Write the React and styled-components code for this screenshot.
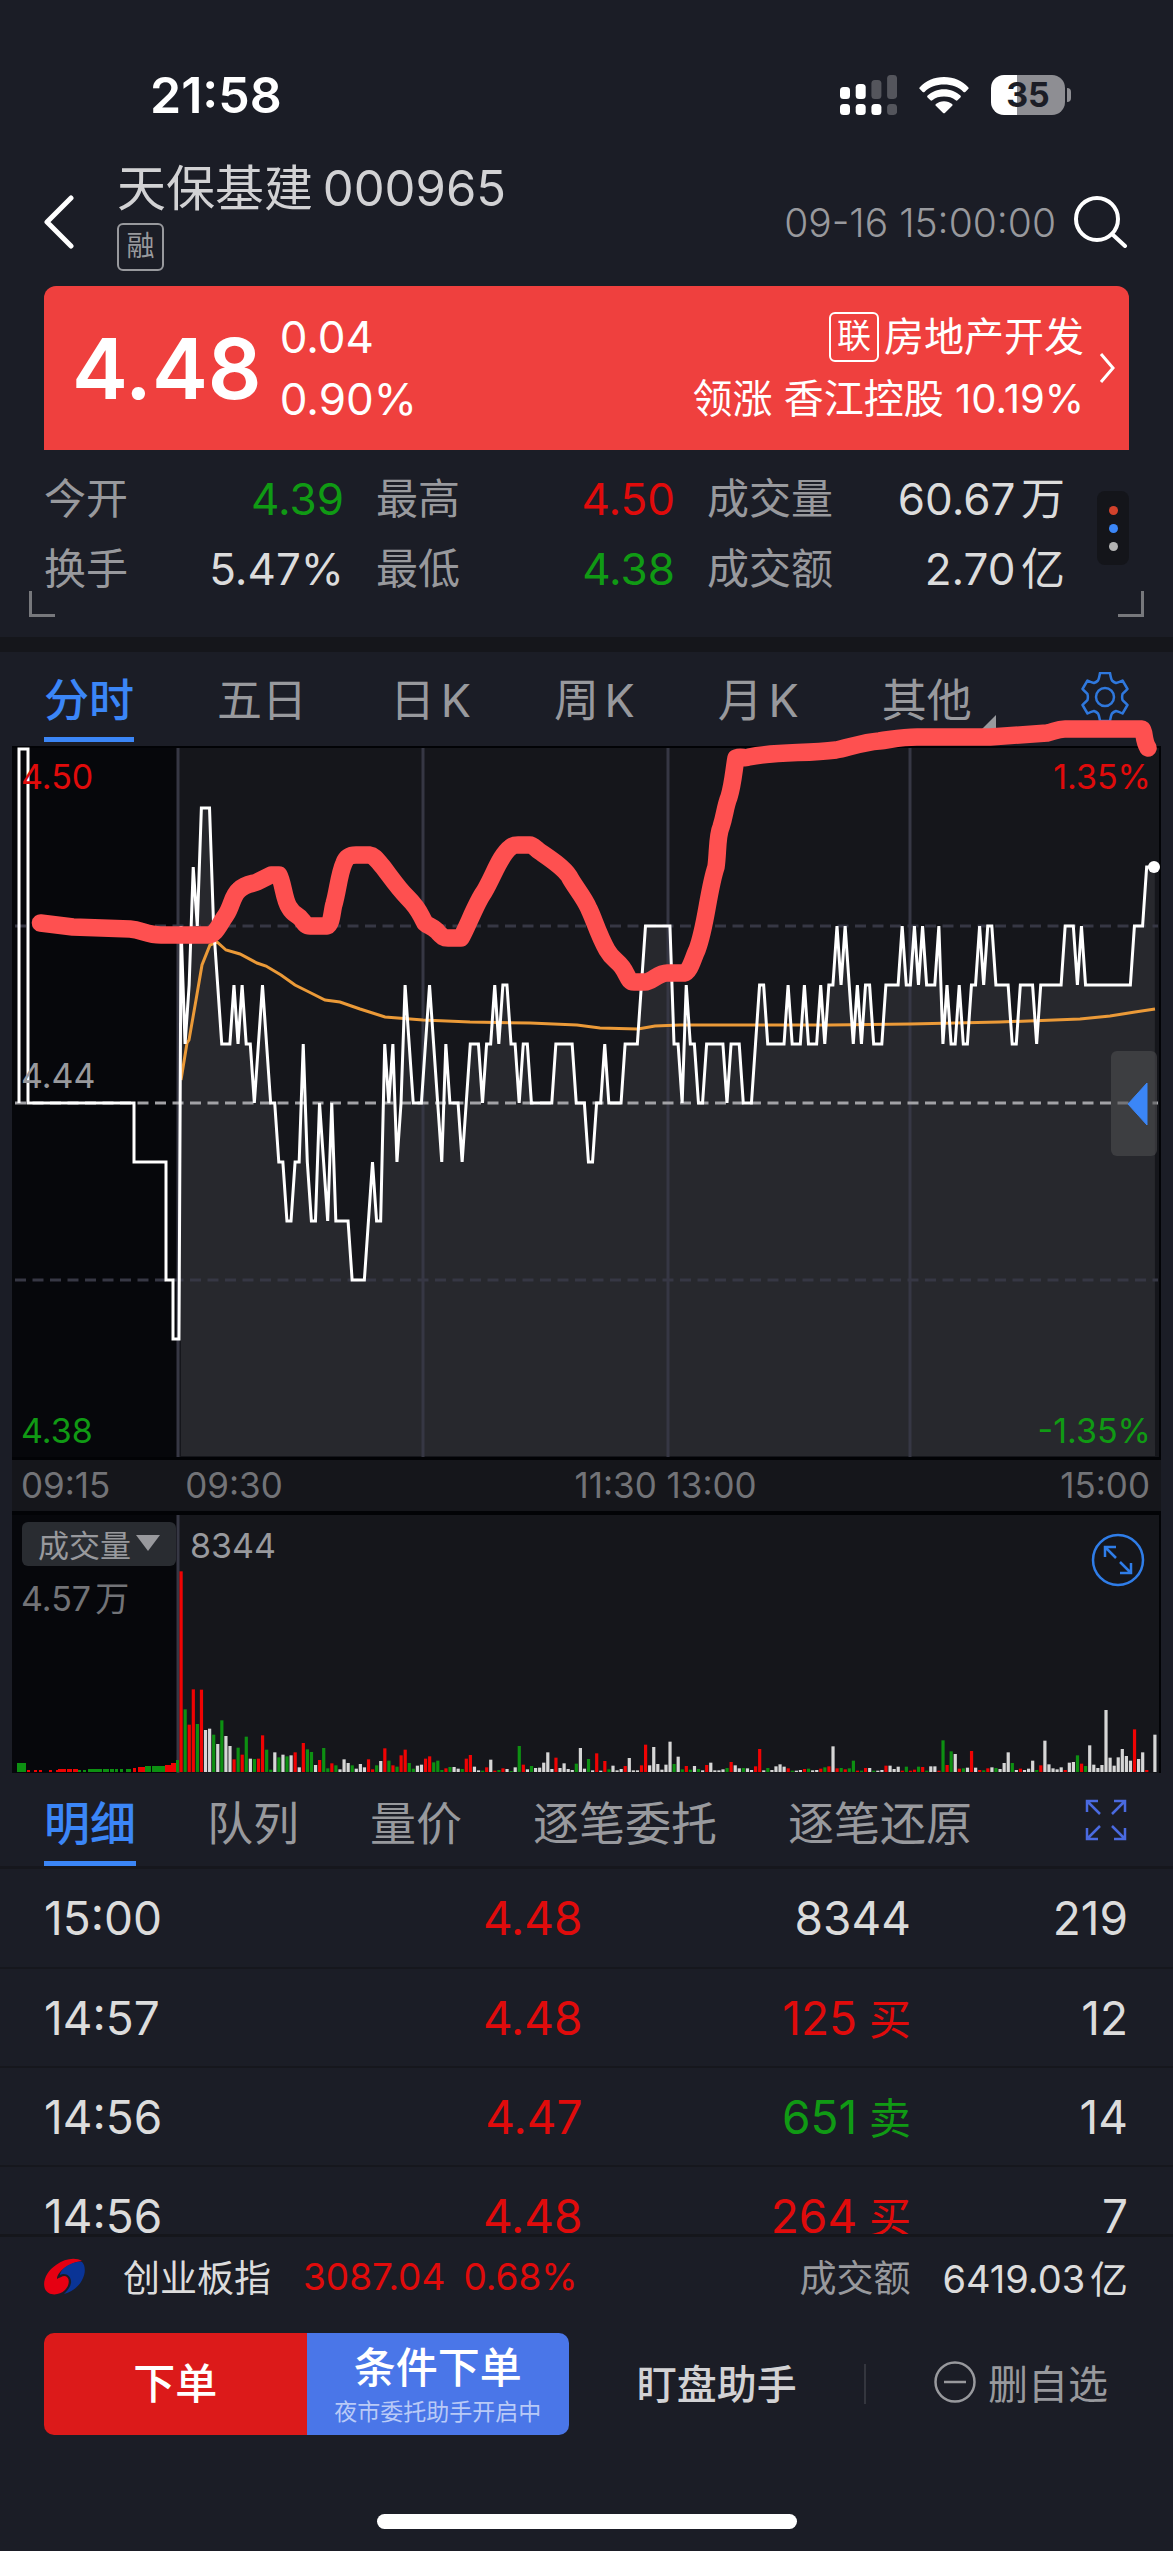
import styled, { createGlobalStyle, css } from "styled-components";

const colors = {
  page: "#1b1d26",
  panel: "#15161b",
  night: "#06070b",
  grid: "#363744",
  text: "#dcdcdc",
  muted: "#98999d",
  dim: "#727377",
  red: "#e00b0b",
  green: "#109a14",
  blue: "#3b86f7",
};

const BAR_COLORS = { r: "#f00303", g: "#0d9012", w: "#d6d6d6" };

// [minute, price in cents over 4.00]
const PRICES = [
  [0, 47], [1, 45], [2, 46], [3, 48], [4, 47], [5, 49], [7, 49], [8, 47], [9, 46], [10, 45],
  [12, 45], [13, 46], [14, 45], [15, 46], [16, 45], [17, 45], [18, 44], [19, 45], [20, 46],
  [21, 45], [22, 44], [23, 44], [24, 43], [25, 43], [26, 42], [27, 42], [28, 43], [29, 43],
  [30, 45], [31, 43], [32, 42], [33, 42], [34, 44], [35, 43], [36, 42], [37, 44], [38, 42],
  [41, 42], [42, 41], [45, 41], [46, 42], [47, 43], [48, 42], [49, 42], [50, 45], [51, 44],
  [52, 45], [53, 43], [54, 44], [55, 46], [56, 45], [57, 44], [59, 44], [60, 45], [61, 46],
  [62, 45], [63, 44], [64, 43], [65, 45], [66, 44], [68, 44], [69, 43], [70, 44], [71, 45],
  [73, 45], [74, 44], [75, 45], [76, 45], [77, 46], [78, 45], [79, 46], [80, 46], [81, 45],
  [82, 45], [83, 44], [84, 45], [85, 45], [86, 44], [91, 44], [92, 45], [96, 45], [97, 44],
  [99, 44], [100, 43], [101, 43], [102, 44], [103, 44], [104, 45], [105, 44], [108, 44],
  [109, 45], [112, 45], [113, 46], [114, 47], [120, 47], [121, 45], [122, 45], [123, 44],
  [124, 46], [125, 45], [126, 45], [127, 44], [128, 44], [129, 45], [133, 45], [134, 44],
  [135, 45], [137, 45], [138, 44], [140, 44], [141, 45], [142, 46], [143, 46], [144, 45],
  [148, 45], [149, 46], [150, 45], [152, 45], [153, 46], [154, 45], [156, 45], [157, 46],
  [158, 45], [159, 46], [160, 46], [161, 47], [162, 46], [163, 47], [164, 46], [165, 45],
  [166, 46], [167, 45], [168, 46], [169, 46], [170, 45], [172, 45], [173, 46], [176, 46],
  [177, 47], [178, 46], [179, 46], [180, 47], [181, 46], [182, 47], [183, 46], [185, 46],
  [186, 47], [187, 45], [188, 46], [189, 45], [190, 45], [191, 46], [192, 45], [193, 45],
  [194, 46], [195, 46], [196, 47], [197, 46], [198, 47], [199, 47], [200, 46], [203, 46],
  [204, 45], [205, 45], [206, 46], [209, 46], [210, 45], [211, 46], [216, 46], [217, 47],
  [219, 47], [220, 46], [221, 47], [222, 46], [233, 46], [234, 47], [236, 47], [237, 48],
  [239, 48],
];

// one entry per minute: colour and relative volume
const VOLUMES = `r602 g188 r142 r248 g144 r247 w126 w130 g112 w84 g155 w108 w78 r38 g73 r52 g106 w40 g39 r40
r110 g67 g7 w59 g44 w52 g47 w50 r59 w14 r87 g68 g60 w21 r36 g72 g11 r26 g20 w8
w38 w27 g20 w10 w24 w14 r38 r8 g20 w33 r71 g34 r20 g16 r50 r67 g27 g10 w19 w22
r40 r47 g29 g34 g6 r11 g15 w15 w10 g9 r40 r51 w16 w5 g4 r14 w37 r4 g6 r11
w9 g3 w14 g78 r22 w8 g18 w12 w13 w28 w59 w9 r43 w12 w26 w9 w6 g25 w72 w10
g39 w5 r56 w4 r33 g8 w19 w5 w9 r18 w42 w5 w5 r20 r82 w20 w75 w24 w7 w22
w91 g24 w46 g8 r18 g7 w18 g9 w5 r21 w28 w5 w5 w8 g12 r30 w20 w11 g12 w11
w6 r17 r69 w5 g12 w6 w17 w23 w16 r11 g4 w4 w6 r9 g10 w5 w6 r10 g14 r17
w77 r11 g12 r8 g11 g34 r4 g4 r12 w12 g4 w4 w6 r19 w19 w9 w16 r4 g16 r4
r7 g16 r15 g4 w17 w17 r4 g95 r21 g62 w54 r10 g11 w13 r63 w13 r6 g5 r11 w14
g12 w9 w27 w59 g27 w6 r10 w6 w10 w34 g6 r20 w94 w23 w11 w8 w14 r6 w28 w30
g50 r25 g18 w80 w22 w12 w21 w186 w43 w19 w44 w69 w48 w34 r128 w39 w59 r6 w0 w112`
  .split(/\s+/)
  .map((item) => ({ color: BAR_COLORS[item[0]], volume: Number(item.slice(1)) }));

// call auction bars: [x, width, height, colour]
const AUCTION = [
  [5, 9, 9, "g"], [15, 3, 2, "r"], [22, 3, 2, "r"], [27, 3, 2, "r"], [37, 3, 2, "r"], [44, 2, 2, "r"],
  [46, 8, 3, "r"], [55, 5, 3, "r"], [61, 5, 3, "r"], [66, 3, 2, "g"], [71, 3, 2, "g"], [76, 14, 3, "g"],
  [91, 6, 3, "g"], [98, 4, 3, "g"], [103, 3, 3, "g"], [108, 3, 3, "g"], [114, 5, 3, "g"], [121, 3, 4, "r"],
  [126, 7, 5, "r"], [133, 6, 6, "g"], [140, 13, 6, "g"], [153, 6, 7, "r"], [159, 5, 9, "r"], [164, 3, 12, "g"],
];

const QUOTES = [
  { label: "今开", value: "4.39", color: colors.green },
  { label: "最高", value: "4.50", color: colors.red },
  { label: "成交量", value: "60.67万" },
  { label: "换手", value: "5.47%" },
  { label: "最低", value: "4.38", color: colors.green },
  { label: "成交额", value: "2.70亿" },
];

const TRADES = [
  { time: "15:00", price: "4.48", volume: "8344", count: 219 },
  { time: "14:57", price: "4.48", volume: "125", side: "买", count: 12 },
  { time: "14:56", price: "4.47", volume: "651", side: "卖", count: 14 },
  { time: "14:56", price: "4.48", volume: "264", side: "买", count: 7 },
];

const SIDE_COLORS = { 买: colors.red, 卖: colors.green };

const minuteX = (minute) => 169 + minute * 4.0745;
const priceY = (cents) => 3 + (50 - cents) * 59;

const points = PRICES.map(([m, p]) => `${minuteX(m)},${priceY(p)}`).join(" ");

const PriceChart = () => (
  <ChartSvg viewBox="0 0 1149 711" aria-label="分时走势">
    <rect width="1149" height="711" fill={colors.panel} />
    <rect width="166" height="711" fill={colors.night} />
    <polygon points={`169,710 ${points} 1143,710`} fill="#27282d" />
    <g stroke={colors.grid} strokeWidth="3">
      {[166, 411, 656, 898].map((x) => (
        <line key={x} x1={x} y1="2" x2={x} y2="711" />
      ))}
      <g strokeDasharray="11 6.5">
        <line x1="3" y1="180" x2="1146" y2="180" />
        <line x1="3" y1="534" x2="1146" y2="534" />
        <line x1="3" y1="357" x2="1146" y2="357" stroke="#a2a2a6" />
      </g>
    </g>
    <path d="M0 1H1148V711" fill="none" stroke="#020306" strokeWidth="2" />
    <polyline
      points="169,334 175,297 177,294 184,254 190,219 198,199 205,196 214,204 228,208 245,217 254,220 269,229 283,239 297,246 313,254 328,256 348,263 373,271 411,274 458,276 518,277 565,279 588,282 626,283 643,280 668,279 818,279 898,278 988,276 1068,273 1098,270 1123,266 1143,263"
      fill="none"
      stroke="#eb9a38"
      strokeWidth="3"
    />
    <polyline
      points={`7,357 7,3 16,3 16,357 122,357 122,416 154,416 154,534 161,534 161,593 167,593 ${points}`}
      fill="none"
      stroke="#fff"
      strokeWidth="3"
    />
    <circle cx="1142" cy="121" r="6" fill="#fff" />
    <path
      d="M28.500 177L61 181L118 183C130 184 135 189 149 189H196C204 189 208 177 214 169C220 160 220 150 227 144C234 137 241 138 245 136L259 129H267C271 136 272 154 277 161C282 170 286 168 290 174C293 178 294 180 298 180H315C320 178 320 164 322 158C326 144 327 128 332 117C335 109 340 109 344 109H357C364 110 366 116 371 121C383 137 387 143 395 151C409 165 408 169 413 177C416 180 420 180 425 185C430 191 432 192 436 192H449C455 182 464 157 472 146C482 129 488 109 499 101C501 99 504 99 506 99H518C521 99 524 103 527 105C540 114 551 121 557 130C562 140 572 151 577 163C582 173 586 188 595 204C600 213 605 214 610 221C616 229 616 236 622 236H633C640 236 646 227 655 227H672C678 226 681 212 685 204C694 181 696 145 704 121C706 107 705 90 709 81C713 69 713 61 717 51C721 38 722 23 724 12C730 10 732 13 737 11C768 5 792 8 824 4C835 2 852 -4 867 -5C882 -7 890 -9 905 -9H978L1035 -13C1041 -14 1045 -17 1053 -17H1130C1133 -14 1131 -6 1136 2"
      fill="none"
      stroke="#fe5050"
      strokeWidth="17.500"
      strokeLinecap="round"
      strokeLinejoin="round"
    />
  </ChartSvg>
);

const VolumeChart = () => (
  <ChartSvg viewBox="0 0 1149 258" aria-label="成交量">
    <rect width="1149" height="258" fill={colors.panel} />
    <rect width="166" height="258" fill={colors.night} />
    <line x1="166" y1="0" x2="166" y2="258" stroke={colors.grid} strokeWidth="3" />
    {AUCTION.map(([x, width, height, color]) => (
      <rect key={x} x={x} y={257 - height} width={width} height={height} fill={BAR_COLORS[color]} />
    ))}
    {VOLUMES.map(({ color, volume }, minute) => (
      <rect
        key={minute}
        x={minuteX(minute) - 1.5}
        y={257 - volume / 3}
        width="3.200"
        height={volume / 3}
        fill={color}
      />
    ))}
    <path d="M1148 0V258" stroke="#020306" strokeWidth="2" />
  </ChartSvg>
);

const SignalIcon = () => (
  <svg width="57" height="41" viewBox="0 0 57 41" aria-hidden="true">
    {[0, 1, 2, 3].map((i) => (
      <g key={i} fill="#fff">
        <rect x={i * 15.7} y={[12, 9, 5, 0][i]} width="10" height={[12, 15, 19, 24][i]} rx="3.500" opacity={i > 1 ? 0.25 : 1} />
        <rect x={i * 15.7} y="29" width="10" height="11" rx="3.500" opacity={i > 2 ? 0.25 : 1} />
      </g>
    ))}
  </svg>
);

const WifiIcon = () => (
  <svg width="50" height="37" viewBox="0 0 50 37" aria-hidden="true" fill="#fff">
    <path d="M25 0C35 0 43.500 4 49.200 10.200C49.800 10.800 49.800 11.500 49.200 12L46.300 14.900C45.800 15.400 45 15.400 44.500 14.900C39.300 9.800 32.600 7.500 25 7.500S10.700 9.800 5.500 14.900C5 15.400 4.200 15.400 3.700 14.900L.8 12C.2 11.500 .2 10.800 .8 10.200C6.500 4 15 0 25 0Z" />
    <path d="M25 12.200C31.500 12.200 37.300 14.700 41.400 18.600C42 19.200 42 19.900 41.400 20.500L38.500 23.300C38 23.800 37.300 23.800 36.700 23.300C33.500 20.500 29.500 19.500 25 19.500S16.500 20.500 13.300 23.300C12.700 23.800 12 23.800 11.500 23.300L8.600 20.500C8 19.900 8 19.200 8.600 18.600C12.700 14.700 18.500 12.200 25 12.200Z" />
    <path d="M25 24.200C28.200 24.200 31 25.300 33.100 27C33.700 27.500 33.700 28.300 33.200 28.800L25.900 35.900C25.400 36.400 24.600 36.400 24.100 35.900L16.800 28.800C16.300 28.300 16.300 27.500 16.900 27C19 25.300 21.800 24.200 25 24.200Z" />
  </svg>
);

const GearIcon = () => (
  <svg width="48" height="50" viewBox="0 0 48 50" fill="none" stroke="#2f78dd" strokeWidth="2.500" strokeLinejoin="round" aria-hidden="true">
    <path d="M19 1H29C29.500 4 30 7 31 8.500C32 9.500 33.500 10.500 35 11C37.500 10.500 39.500 9.500 41.500 8.500L46.500 17C45 19 42.500 20.500 41.500 22C41 24 41 26 41.500 28C42.500 29.500 45 31 46.500 33L41.500 41.500C39.500 40.500 37.500 39.500 35 39C33.500 39.500 32 40.500 31 41.500C30 43 29.500 46 29 49H19C18.500 46 18 43 17 41.500C16 40.500 14.500 39.500 13 39C10.500 39.500 8.500 40.500 6.500 41.500L1.500 33C3 31 5.500 29.500 6.500 28C7 26 7 24 6.500 22C5.500 20.500 3 19 1.500 17L6.500 8.500C8.500 9.500 10.500 10.500 13 11C14.500 10.500 16 9.500 17 8.500C18 7 18.500 4 19 1Z" />
    <circle cx="24" cy="25" r="9" />
  </svg>
);

const BrandIcon = () => (
  <svg width="41" height="37" viewBox="0 0 41 37" aria-hidden="true">
    <path d="M38 3C32-1 21 0 12 7C3 13-2 23 1 31C4 38 15 38 21 32C26 27 26 19 21 18C18 18 15 20 13 21C13 14 24 5 38 3Z" fill="#e60012" />
    <path d="M38 4C33 3 25 6 20 10C17 13 16 15 16 17C22 14 28 19 27 25C26 30 23 33 20 36C28 34 36 28 39 20C42 13 41 7 38 4Z" fill="#0a3496" />
  </svg>
);

const App = () => {
  return (
    <Page>
      <GlobalStyle />
      <StatusBar>
        <Clock>21:58</Clock>
        <StatusIcons>
          <SignalIcon />
          <WifiIcon />
          <Battery>35</Battery>
        </StatusIcons>
      </StatusBar>

      <Header>
        <IconButton aria-label="返回">
          <svg width="30" height="54" viewBox="0 0 30 54" fill="none" stroke="#fff" strokeWidth="5" strokeLinecap="round" strokeLinejoin="round">
            <path d="M27 3L3 27L27 51" />
          </svg>
        </IconButton>
        <Title>
          <h1>
            天保基建 <span>000965</span>
          </h1>
          <Tag>融</Tag>
        </Title>
        <QuoteTime>09-16 15:00:00</QuoteTime>
        <IconButton aria-label="搜索">
          <svg width="54" height="52" viewBox="0 0 54 52" fill="none" stroke="#fff" strokeWidth="4" strokeLinecap="round">
            <circle cx="23" cy="23" r="21" />
            <path d="M38 38L51 50" />
          </svg>
        </IconButton>
      </Header>

      <PriceCard>
        <LastPrice>4.48</LastPrice>
        <Change>
          <span>0.04</span>
          <span>0.90%</span>
        </Change>
        <Sector href="#sector">
          <span>
            <SectorTag>联</SectorTag>
            房地产开发
          </span>
          <span>领涨 香江控股 10.19%</span>
        </Sector>
        <svg width="16" height="30" viewBox="0 0 16 30" fill="none" stroke="#fff" strokeWidth="3" aria-hidden="true">
          <path d="M2 1L14 15L2 29" />
        </svg>
      </PriceCard>

      <QuotePanel>
        <QuoteGrid>
          {QUOTES.map(({ label, value, color }) => (
            <Quote key={label} $color={color}>
              <dt>{label}</dt>
              <dd>{value}</dd>
            </Quote>
          ))}
        </QuoteGrid>
        <MoreButton aria-label="更多">
          <Dot $color="#d2422c" />
          <Dot $color="#3b86f7" />
          <Dot $color="#b4b4b4" />
        </MoreButton>
        <Corner />
        <Corner $right />
      </QuotePanel>
      <Band />

      <PeriodTabs>
        <Tab $active>分时</Tab>
        <Tab>五日</Tab>
        <Tab>日K</Tab>
        <Tab>周K</Tab>
        <Tab>月K</Tab>
        <Tab $menu>其他</Tab>
        <IconButton aria-label="设置">
          <GearIcon />
        </IconButton>
      </PeriodTabs>

      <Charts>
        <ChartBox>
          <PriceChart />
          <ChartLabel $top="1%" $color={colors.red}>4.50</ChartLabel>
          <ChartLabel $top="43%" $color={colors.muted}>4.44</ChartLabel>
          <ChartLabel $top="93%" $color={colors.green}>4.38</ChartLabel>
          <ChartLabel $right $top="1%" $color={colors.red}>1.35%</ChartLabel>
          <ChartLabel $right $top="93%" $color={colors.green}>-1.35%</ChartLabel>
          <Drawer aria-label="展开盘口">
            <svg width="21" height="44" viewBox="0 0 21 44" aria-hidden="true">
              <path d="M20 1V43L1 22Z" fill={colors.blue} stroke={colors.blue} strokeLinejoin="round" />
            </svg>
          </Drawer>
        </ChartBox>
        <TimeAxis>
          <span>09:15</span>
          <span>09:30</span>
          <span>11:30 13:00</span>
          <span>15:00</span>
        </TimeAxis>
        <ChartBox>
          <VolumeChart />
          <Indicator>
            <IndicatorButton>
              成交量
              <svg width="24" height="16" viewBox="0 0 24 16" aria-hidden="true">
                <path d="M0 0H24L12 16Z" fill={colors.muted} />
              </svg>
            </IndicatorButton>
            <span>8344</span>
          </Indicator>
          <MaxVolume>4.57万</MaxVolume>
          <ExpandButton aria-label="放大">
            <svg width="54" height="54" viewBox="0 0 54 54" fill="none" stroke="#2f7de8" strokeWidth="2.500">
              <circle cx="27" cy="27" r="25" />
              <path d="M25 25L14 14M14 24V14H25M29 29L40 40M40 30V40H29" />
            </svg>
          </ExpandButton>
        </ChartBox>
      </Charts>

      <DetailTabs>
        <Tab $active>明细</Tab>
        <Tab>队列</Tab>
        <Tab>量价</Tab>
        <Tab>逐笔委托</Tab>
        <Tab>逐笔还原</Tab>
        <IconButton aria-label="全屏">
          <svg width="42" height="42" viewBox="0 0 42 42" fill="none" stroke="#4a6ae0" strokeWidth="2.500">
            <path d="M2 13V2H13M2 2L15 15M29 2H40V13M40 2L27 15M2 29V40H13M2 40L15 27M40 29V40H29M40 40L27 27" />
          </svg>
        </IconButton>
      </DetailTabs>

      <TradeList>
        <TradeTable>
          <tbody>
            {TRADES.map(({ time, price, volume, side, count }) => (
              <tr key={volume}>
                <TradeCell $width="23%">{time}</TradeCell>
                <TradeCell $width="27%" $color={colors.red}>{price}</TradeCell>
                <TradeCell $width="28%" $color={SIDE_COLORS[side]}>
                  {volume}
                  {side && <small> {side}</small>}
                </TradeCell>
                <TradeCell>{count}</TradeCell>
              </tr>
            ))}
          </tbody>
        </TradeTable>
      </TradeList>

      <IndexBar>
        <BrandIcon />
        <strong>创业板指</strong>
        <IndexValue>
          <span>3087.04</span>
          <span>0.68%</span>
        </IndexValue>
        <Turnover>成交额</Turnover>
        <span>6419.03亿</span>
      </IndexBar>

      <ActionBar>
        <OrderButtons>
          <OrderButton $color="#dc1a1a">下单</OrderButton>
          <OrderButton $color="#4a76e8">
            条件下单
            <small>夜市委托助手开启中</small>
          </OrderButton>
        </OrderButtons>
        <TextButton>盯盘助手</TextButton>
        <Separator />
        <TextButton $muted>
          <svg width="42" height="42" viewBox="0 0 42 42" fill="none" stroke="currentColor" strokeWidth="2.500" aria-hidden="true">
            <circle cx="21" cy="21" r="19.500" />
            <path d="M10 21H32" />
          </svg>
          删自选
        </TextButton>
      </ActionBar>
      <HomeIndicator />
    </Page>
  );
};

export default App;

const GlobalStyle = createGlobalStyle`
  * {
    box-sizing: border-box;
  }
  body {
    margin: 0;
    background: ${colors.page};
    color: ${colors.text};
    font-family: Inter, "Noto Sans CJK SC", sans-serif;
    text-autospace: normal;
  }
  h1, dl, dd {
    margin: 0;
  }
  button {
    padding: 0;
    border: 0;
    background: none;
    color: inherit;
    font: inherit;
    cursor: pointer;
  }
  svg {
    display: block;
    flex-shrink: 0;
  }
`;

const Page = styled.main`
  display: flex;
  flex-direction: column;
  overflow: hidden;
`;

const StatusBar = styled.div`
  display: flex;
  align-items: center;
  justify-content: space-between;
  height: 154px;
  padding: 36px 108px 0 150px;
`;

const Clock = styled.span`
  color: #fff;
  font-size: 50px;
  font-weight: 600;
`;

const StatusIcons = styled.div`
  display: flex;
  align-items: center;
  gap: 22px;
`;

const Battery = styled.span`
  position: relative;
  width: 74px;
  height: 40px;
  border-radius: 13px;
  background: linear-gradient(90deg, #fff 35%, #8e8e93 35%);
  color: ${colors.page};
  font-size: 34px;
  font-weight: 700;
  line-height: 40px;
  text-align: center;

  &::after {
    content: "";
    position: absolute;
    top: 13px;
    right: -6px;
    width: 4px;
    height: 14px;
    border-radius: 0 4px 4px 0;
    background: #8e8e93;
  }
`;

const IconButton = styled.button`
  flex-shrink: 0;
`;

const Header = styled.header`
  display: flex;
  align-items: center;
  height: 132px;
  padding: 4px 45px 0 44px;
`;

const Title = styled.div`
  flex: 1;
  margin-left: 43px;
  padding-bottom: 14px;

  h1 {
    color: #d2d2d4;
    font-size: 49px;
    font-weight: 400;
    line-height: 60px;
    white-space: nowrap;
  }
  h1 span {
    margin-left: -4px;
  }
`;

const Tag = styled.span`
  display: block;
  width: 47px;
  height: 48px;
  margin-top: 4px;
  border: 2px solid ${colors.muted};
  border-radius: 6px;
  color: ${colors.muted};
  font-size: 28px;
  line-height: 42px;
  text-align: center;
`;

const QuoteTime = styled.time`
  margin-right: 18px;
  color: ${colors.muted};
  font-size: 39px;
  font-weight: 300;
`;

const PriceCard = styled.section`
  display: flex;
  align-items: center;
  height: 164px;
  margin: 0 44px;
  padding: 0 14px 0 28px;
  border-radius: 12px 12px 0 0;
  background: #ef403e;
  color: #fff;
`;

const LastPrice = styled.strong`
  font-size: 84px;
  font-weight: 600;
`;

const Change = styled.div`
  display: grid;
  margin-left: 18px;
  font-size: 44px;
  line-height: 62px;
`;

const Sector = styled.a`
  display: grid;
  justify-items: end;
  margin-left: auto;
  margin-right: 15px;
  color: inherit;
  font-size: 40px;
  line-height: 62px;
  text-decoration: none;

  > span {
    display: flex;
    align-items: center;
    white-space: pre;
  }
`;

const SectorTag = styled.span`
  width: 50px;
  height: 50px;
  margin-right: 5px;
  border: 2px solid #fff;
  border-radius: 6px;
  font-size: 34px;
  line-height: 44px;
  text-align: center;
`;

const QuotePanel = styled.section`
  position: relative;
  display: flex;
  align-items: center;
  height: 187px;
  padding: 0 44px 19px;
`;

const QuoteGrid = styled.dl`
  flex: 1;
  display: grid;
  grid-template-columns: 300fr 299fr 358fr;
  column-gap: 32px;
`;

const Quote = styled.div`
  display: flex;
  justify-content: space-between;
  font-size: 42px;
  line-height: 70px;

  dt {
    color: ${colors.muted};
  }
  dd {
    color: ${({ $color }) => $color || colors.text};
    font-size: 44px;
  }
`;

const MoreButton = styled.button`
  display: flex;
  flex-direction: column;
  align-items: center;
  justify-content: center;
  gap: 9px;
  width: 32px;
  height: 74px;
  margin-left: 32px;
  margin-bottom: 12px;
  border-radius: 8px;
  background: #14151a;
`;

const Dot = styled.span`
  width: 9px;
  height: 9px;
  border-radius: 50%;
  background: ${({ $color }) => $color};
`;

const Corner = styled.span`
  position: absolute;
  bottom: 20px;
  ${({ $right }) => ($right ? "right: 29px;" : "left: 29px;")}
  width: 26px;
  height: 26px;
  border: solid #77787c;
  border-width: ${({ $right }) => ($right ? "0 3px 3px 0" : "0 0 3px 3px")};
`;

const Band = styled.div`
  height: 15px;
  background: ${colors.panel};
`;

const tabRow = css`
  display: flex;
  align-items: stretch;
  padding: 0 44px;

  ${IconButton} {
    margin-left: auto;
  }
`;

const PeriodTabs = styled.nav`
  ${tabRow}
  gap: 83px;
  height: 94px;
  padding-bottom: 4px;
  font-size: 45px;
`;

const DetailTabs = styled.nav`
  ${tabRow}
  gap: 71px;
  height: 96px;
  padding-right: 46px;
  border-bottom: 3px solid #16171d;
  font-size: 46px;
`;

const Tab = styled.button`
  position: relative;
  border-top: 5px solid transparent;
  border-bottom: 5px solid ${({ $active }) => ($active ? colors.blue : "transparent")};
  color: ${({ $active }) => ($active ? colors.blue : colors.muted)};
  font-weight: ${({ $active }) => ($active ? 500 : 400)};
  white-space: nowrap;

  ${({ $menu }) =>
    $menu &&
    css`
      &::after {
        content: "";
        position: absolute;
        right: -24px;
        bottom: 8px;
        border: 7px solid;
        border-color: transparent ${colors.muted} ${colors.muted} transparent;
      }
    `}
`;

const Charts = styled.section`
  margin: 0 12px;
  background: #020306;
`;

const ChartBox = styled.div`
  position: relative;
`;

const ChartSvg = styled.svg`
  width: 100%;
  overflow: visible;
`;

const ChartLabel = styled.span`
  position: absolute;
  top: ${({ $top }) => $top};
  ${({ $right }) => ($right ? "right: 10px;" : "left: 9px;")}
  color: ${({ $color }) => $color};
  font-size: 34px;
  line-height: 48px;
`;

const Drawer = styled.button`
  position: absolute;
  top: 305px;
  right: 4px;
  display: flex;
  align-items: center;
  justify-content: flex-end;
  width: 46px;
  height: 105px;
  padding-right: 9px;
  border-radius: 6px;
  background: rgba(80, 80, 82, 0.55);
`;

const TimeAxis = styled.div`
  display: grid;
  grid-template-columns: 164fr 389fr 290fr 285fr;
  margin: 3px 0 4px;
  padding: 0 11px 0 9px;
  background: ${colors.panel};
  color: ${colors.dim};
  font-size: 35px;
  line-height: 51px;

  span:last-child {
    text-align: right;
  }
`;

const Indicator = styled.div`
  position: absolute;
  top: 7px;
  left: 10px;
  display: flex;
  align-items: flex-end;
  gap: 14px;
  color: ${colors.muted};
  font-size: 34px;
`;

const IndicatorButton = styled.button`
  display: flex;
  align-items: center;
  gap: 5px;
  width: 154px;
  height: 44px;
  padding: 0 0 2px 16px;
  border-radius: 6px;
  background: #292c31;
  font-size: 31px;
`;

const MaxVolume = styled.span`
  position: absolute;
  top: 60px;
  left: 9px;
  color: ${colors.dim};
  font-size: 34px;
  line-height: 48px;
`;

const ExpandButton = styled.button`
  position: absolute;
  top: 18px;
  right: 16px;
`;

const TradeList = styled.section`
  height: 365px;
  overflow: hidden;
`;

const TradeTable = styled.table`
  width: 100%;
  border-collapse: collapse;
  table-layout: fixed;
`;

const TradeCell = styled.td`
  width: ${({ $width }) => $width || "auto"};
  height: 99px;
  padding: 0;
  border-bottom: 2px solid #16171d;
  color: ${({ $color }) => $color || colors.text};
  font-size: 46px;
  line-height: 60px;
  text-align: right;
  white-space: pre;

  &:nth-child(2),
  &:nth-child(3) {
    padding-right: 4px;
  }
  &:first-child {
    padding-left: 44px;
    text-align: left;
  }
  &:last-child {
    padding-right: 45px;
  }
  small {
    font-size: 42px;
    line-height: 1;
  }
`;

const IndexBar = styled.section`
  display: flex;
  align-items: center;
  height: 85px;
  padding: 0 45px 4px 44px;
  border-top: 3px solid #15161b;
  font-size: 38px;
  white-space: nowrap;

  strong {
    margin-left: 38px;
    font-size: 37px;
    font-weight: 400;
  }
`;

const IndexValue = styled.div`
  display: flex;
  gap: 18px;
  margin-left: 32px;
  color: ${colors.red};
  font-size: 37px;
`;

const Turnover = styled.span`
  margin-left: auto;
  margin-right: 32px;
  color: ${colors.muted};
  font-size: 37px;
`;

const ActionBar = styled.footer`
  display: flex;
  align-items: center;
  justify-content: space-between;
  padding: 14px 65px 0 44px;
`;

const OrderButtons = styled.div`
  display: grid;
  grid-template-columns: 1fr 1fr;
  width: 525px;
  height: 102px;
  border-radius: 10px;
  overflow: hidden;
`;

const OrderButton = styled.button`
  background: ${({ $color }) => $color};
  color: #fff;
  font-size: 42px;
  font-weight: 500;
  line-height: 56px;

  small {
    display: block;
    color: #b9caf7;
    font-size: 23px;
    font-weight: 400;
    line-height: 32px;
  }
`;

const TextButton = styled.button`
  display: flex;
  align-items: center;
  gap: 12px;
  padding-bottom: 4px;
  color: ${({ $muted }) => ($muted ? colors.muted : "#d2d2d4")};
  font-size: 40px;
  font-weight: ${({ $muted }) => ($muted ? 400 : 500)};
`;

const Separator = styled.span`
  width: 2px;
  height: 40px;
  background: #34363e;
`;

const HomeIndicator = styled.div`
  align-self: center;
  width: 420px;
  height: 15px;
  margin: 79px 0 23px;
  border-radius: 8px;
  background: #fff;
`;
